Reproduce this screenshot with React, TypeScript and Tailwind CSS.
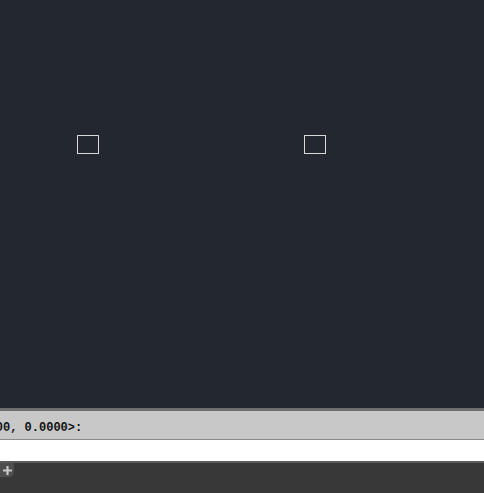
import React from "react";

export default function App() {
  return (
    <div className="w-[484px] h-[493px] flex flex-col overflow-hidden bg-[#383838]">
      <div className="h-[408px] bg-[#232830] relative shrink-0">
        <div className="absolute left-[77px] top-[135px] w-[22px] h-[19px] border border-[#d8d8d8]" />
        <div className="absolute left-[304px] top-[135px] w-[22px] h-[19px] border border-[#d8d8d8]" />
      </div>
      <div className="h-[3px] bg-[#6e6e6e] shrink-0" />
      <div className="h-[29px] bg-[#c8c8c8] border-b border-[#8a8a8a] flex items-center shrink-0 overflow-hidden">
        <span
          className="ml-[-33px] whitespace-nowrap text-[12px] font-bold text-[#111] leading-none pt-[6px]"
          style={{ fontFamily: '"Liberation Mono", monospace' }}
        >
          0.0000, 0.0000&gt;:
        </span>
      </div>
      <div className="h-[21px] bg-white shrink-0" />
      <div className="h-[2px] bg-[#5c5c5c] shrink-0" />
      <div className="flex-1 bg-[#383838]">
        <div className="w-[14px] h-[14px] bg-[#4e4e4e] rounded-br-[5px] flex items-center justify-center">
          <svg width="11" height="11" viewBox="0 0 11 11">
            <path d="M5.5 1v9M1 5.5h9" stroke="#c8c8c8" strokeWidth="2.2" />
          </svg>
        </div>
      </div>
    </div>
  );
}
